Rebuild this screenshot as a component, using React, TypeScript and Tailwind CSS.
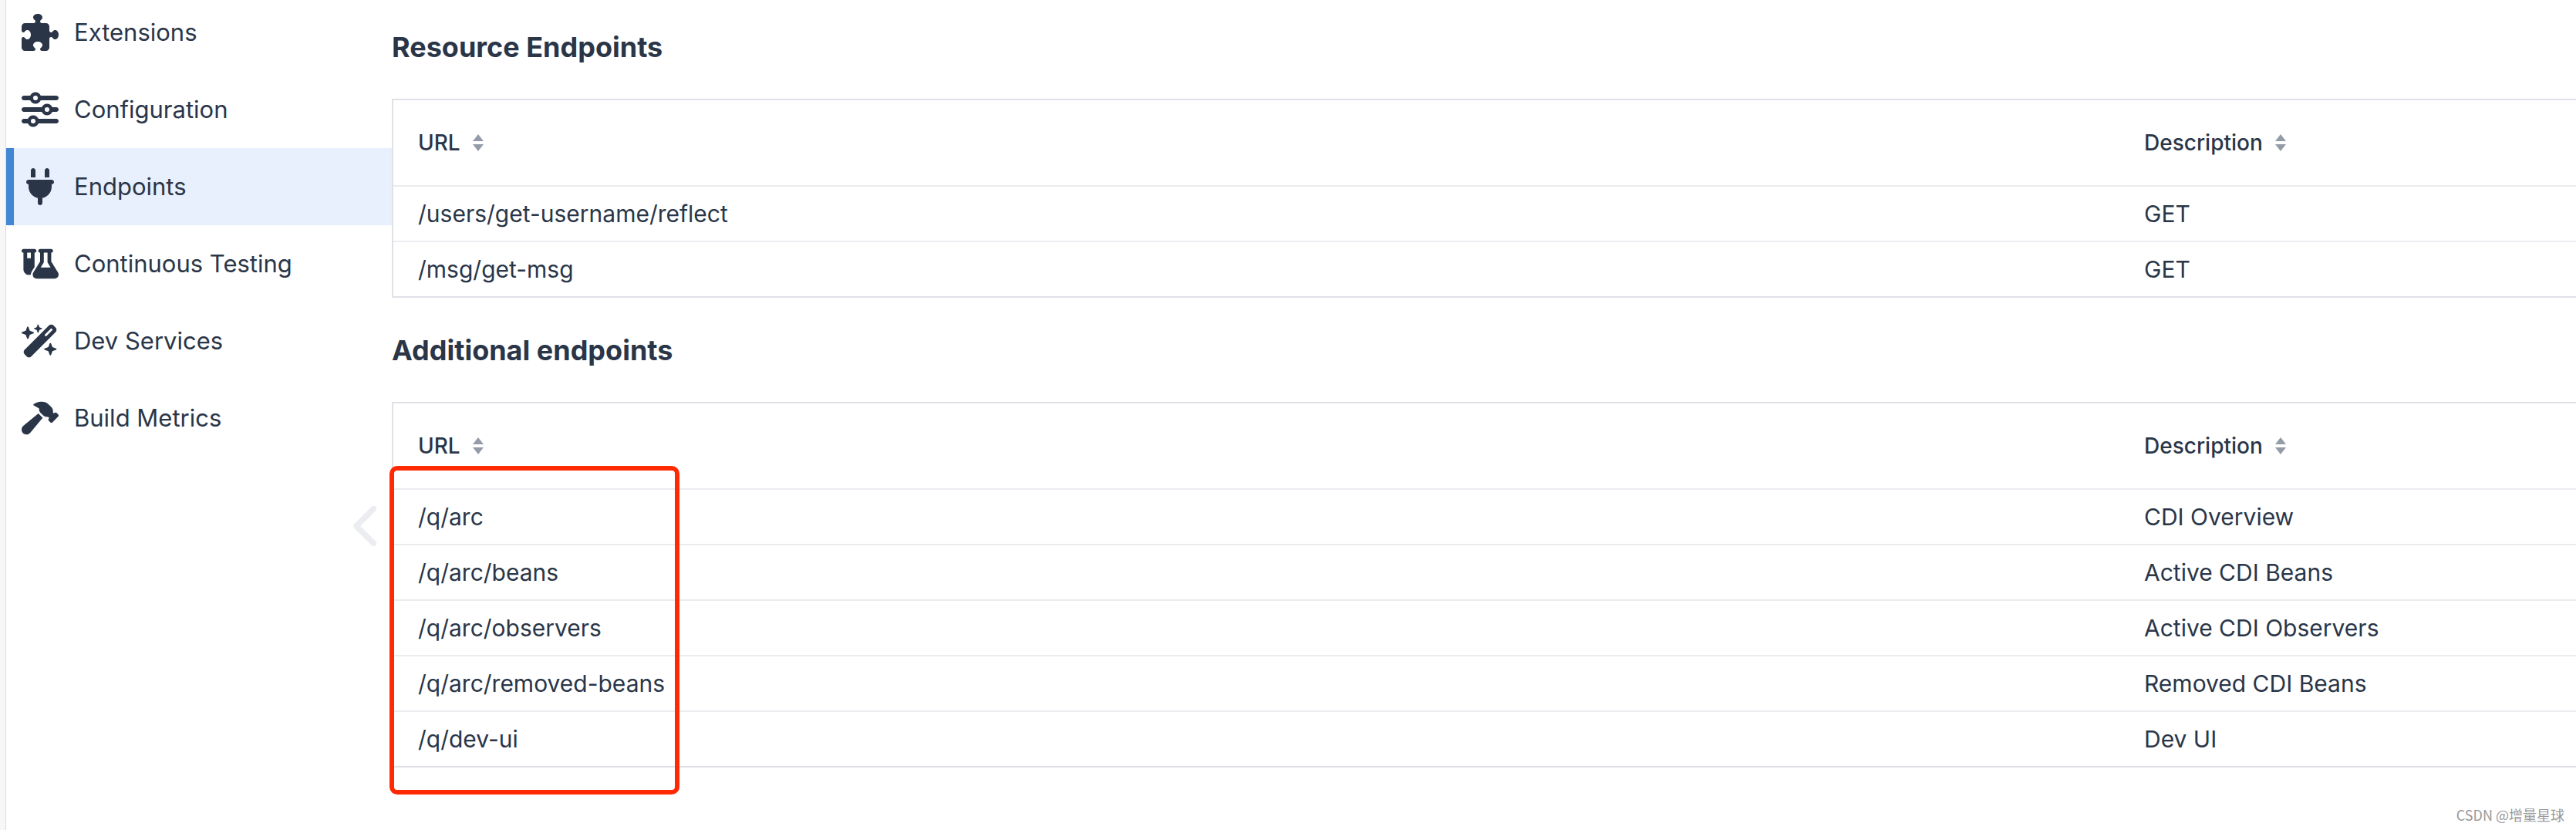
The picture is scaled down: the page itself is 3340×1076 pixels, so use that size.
import type { IconType } from 'react-icons';
import {
  FaChevronLeft,
  FaFlaskVial,
  FaHammer,
  FaPlug,
  FaPuzzlePiece,
  FaSliders,
  FaWandMagicSparkles,
} from 'react-icons/fa6';

interface MenuItem {
  label: string;
  icon: IconType;
  active?: boolean;
}

interface Endpoint {
  url: string;
  description: string;
}

const menu: MenuItem[] = [
  { label: 'Extensions', icon: FaPuzzlePiece },
  { label: 'Configuration', icon: FaSliders },
  { label: 'Endpoints', icon: FaPlug, active: true },
  { label: 'Continuous Testing', icon: FaFlaskVial },
  { label: 'Dev Services', icon: FaWandMagicSparkles },
  { label: 'Build Metrics', icon: FaHammer },
];

const resourceEndpoints: Endpoint[] = [
  { url: '/users/get-username/reflect', description: 'GET' },
  { url: '/msg/get-msg', description: 'GET' },
];

const additionalEndpoints: Endpoint[] = [
  { url: '/q/arc', description: 'CDI Overview' },
  { url: '/q/arc/beans', description: 'Active CDI Beans' },
  { url: '/q/arc/observers', description: 'Active CDI Observers' },
  { url: '/q/arc/removed-beans', description: 'Removed CDI Beans' },
  { url: '/q/dev-ui', description: 'Dev UI' },
];

function Sidebar() {
  return (
    <aside className="-mt-2 flex w-[500px] shrink-0 flex-col">
      <nav className="flex flex-col">
        {menu.map(({ label, icon: Icon, active }) => (
          <a
            key={label}
            href="#"
            className={
              active
                ? 'flex h-25 items-center gap-5 border-l-10 border-[#4187d4] bg-[#e8effd] pl-2.5 text-[31px]'
                : 'flex h-25 items-center gap-5 border-l-10 border-transparent pl-2.5 text-[31px]'
            }
          >
            <Icon className="size-12 shrink-0" />
            {label}
          </a>
        ))}
      </nav>
      <button type="button" aria-label="Collapse menu" className="mt-15 mr-3 self-end text-[#ebedf1]">
        <FaChevronLeft className="h-15 w-[38px]" />
      </button>
    </aside>
  );
}

function SortHeader({ label }: { label: string }) {
  return (
    <button type="button" className="flex items-center gap-4 font-medium">
      {label}
      <svg viewBox="0 0 14 22" className="h-[22px] w-3.5 fill-[#949ca8]" aria-hidden="true">
        <path d="M7 0l7 9H0zM0 13h14l-7 9z" />
      </svg>
    </button>
  );
}

function EndpointTable({ title, rows }: { title: string; rows: Endpoint[] }) {
  return (
    <>
      <h2 className="flex h-[135px] items-center text-4xl font-bold">{title}</h2>
      <table className="w-full table-fixed border-separate border-spacing-0 border-y-2 border-l-2 border-[#e0e1e7] text-left">
        <thead className="text-[28px]">
          <tr className="h-[110px]">
            <th className="px-8">
              <SortHeader label="URL" />
            </th>
            <th className="w-148 px-8">
              <SortHeader label="Description" />
            </th>
          </tr>
        </thead>
        <tbody className="text-[30px]">
          {rows.map((row) => (
            <tr key={row.url} className="h-18">
              <td className="border-t-2 border-[#ebecf0] px-8">{row.url}</td>
              <td className="border-t-2 border-[#ebecf0] px-8">{row.description}</td>
            </tr>
          ))}
        </tbody>
      </table>
    </>
  );
}

export default function App() {
  return (
    <div className="relative flex min-h-screen overflow-hidden bg-white font-['Inter',sans-serif] text-[#2a3648]">
      <div className="w-2 shrink-0 border-r border-[#dedede] bg-[#f7f7f7]" />
      <Sidebar />
      <main className="-mt-[7px] min-w-0 flex-1">
        <EndpointTable title="Resource Endpoints" rows={resourceEndpoints} />
        <div className="relative">
          <EndpointTable title="Additional endpoints" rows={additionalEndpoints} />
          {/* highlight around the URL column */}
          <div className="pointer-events-none absolute top-[218px] -left-[3px] h-[426px] w-94 rounded-[10px] border-6 border-[#ff2a04]" />
        </div>
      </main>
      <p className="absolute right-[15px] bottom-1.5 font-['Noto_Sans_CJK_SC',sans-serif] text-lg text-[#999999]">
        CSDN @增量星球
      </p>
    </div>
  );
}
